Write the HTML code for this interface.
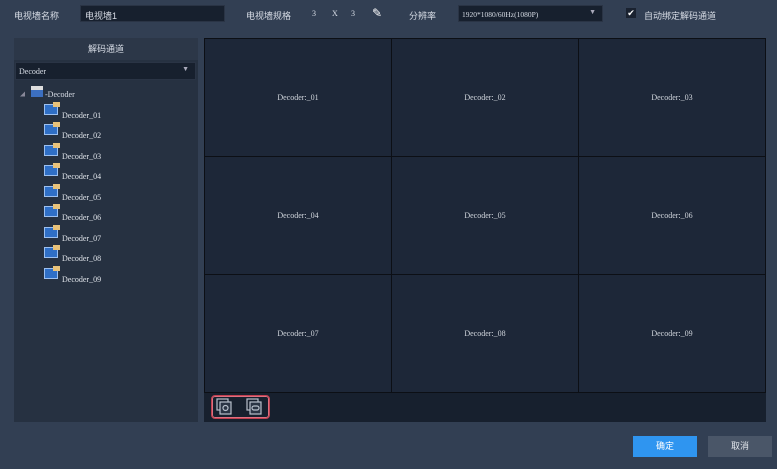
<!DOCTYPE html>
<html><head><meta charset="utf-8"><style>
*{margin:0;padding:0;box-sizing:border-box}
body{width:777px;height:469px;background:#323f53;font-family:"Liberation Sans","Noto Sans CJK SC",sans-serif;font-size:9px;color:#d8dde6;position:relative;overflow:hidden}
.a{position:absolute}
.mono{font-family:"Liberation Serif","Noto Serif CJK SC",serif}
.inp{background:#17202e;border:1px solid #2a3445}
.cell{position:absolute;background:#1d2738;border:1px solid #0c0f15;display:flex;align-items:center;justify-content:center;font-family:"Liberation Serif",serif;font-size:8px;color:#d0d5dc}
.ti{position:absolute;left:46px;font-family:"Liberation Serif",serif;font-size:8px;color:#e0e4ea}
.ic{position:absolute;left:-2px;top:-7px;width:14px;height:11px;background:#2f6fc6;border:1px solid #9cc0f0}
.ic:after{content:"";position:absolute;right:-3px;top:-3px;width:7px;height:5px;background:#e8c27a}
</style></head><body>
<div class="a" style="left:14px;top:9px">电视墙名称</div>
<div class="a inp" style="left:80px;top:5px;width:145px;height:17px;padding:3px 4px">电视墙1</div>
<div class="a" style="left:246px;top:9px">电视墙规格</div>
<div class="a mono" style="left:312px;top:9px;font-size:8px">3</div>
<div class="a mono" style="left:332px;top:9px;font-size:8px">X</div>
<div class="a mono" style="left:351px;top:9px;font-size:8px">3</div>
<div class="a" style="left:372px;top:6px;font-size:12px;color:#fff">✎</div>
<div class="a" style="left:409px;top:9px">分辨率</div>
<div class="a inp" style="left:458px;top:5px;width:145px;height:17px;padding:4px 3px;font-size:7.5px" ><span class="mono">1920*1080/60Hz(1080P)</span><span style="position:absolute;right:6px;top:3px;font-size:7px;color:#aab">▼</span></div>
<div class="a" style="left:626px;top:8px;width:10px;height:10px;background:#1a2230;color:#fff;font-size:9px;line-height:10px;text-align:center">✔</div>
<div class="a" style="left:644px;top:9px">自动绑定解码通道</div>

<div class="a" style="left:14px;top:38px;width:184px;height:384px;background:#263141"></div>
<div class="a" style="left:14px;top:38px;width:184px;height:22px;background:#2c3748;text-align:center;line-height:22px;font-size:9px">解码通道</div>
<div class="a inp" style="left:15px;top:62px;width:181px;height:18px;padding:4px 3px;font-size:8px"><span class="mono">Decoder</span><span style="position:absolute;right:6px;top:3px;font-size:7px;color:#aab">▼</span></div>
<div class="a" style="left:20px;top:91px;font-size:5px;color:#889">◢</div>
<div class="a" style="left:31px;top:86px;width:12px;height:11px;background:#3c6fc0;border-top:4px solid #ddd"></div>
<div class="a mono" style="left:45px;top:90px;font-size:8px">-Decoder</div>
<div class="a" style="left:0;top:0">
<div class="ti" style="top:111px"><span class="ic"></span><span style="margin-left:16px">Decoder_01</span></div>
<div class="ti" style="top:131px"><span class="ic"></span><span style="margin-left:16px">Decoder_02</span></div>
<div class="ti" style="top:152px"><span class="ic"></span><span style="margin-left:16px">Decoder_03</span></div>
<div class="ti" style="top:172px"><span class="ic"></span><span style="margin-left:16px">Decoder_04</span></div>
<div class="ti" style="top:193px"><span class="ic"></span><span style="margin-left:16px">Decoder_05</span></div>
<div class="ti" style="top:213px"><span class="ic"></span><span style="margin-left:16px">Decoder_06</span></div>
<div class="ti" style="top:234px"><span class="ic"></span><span style="margin-left:16px">Decoder_07</span></div>
<div class="ti" style="top:254px"><span class="ic"></span><span style="margin-left:16px">Decoder_08</span></div>
<div class="ti" style="top:275px"><span class="ic"></span><span style="margin-left:16px">Decoder_09</span></div>
</div>

<div class="a" style="left:204px;top:38px;width:562px;height:384px;background:#17202e"></div>
<div class="cell" style="left:204px;top:38px;width:188px;height:119px">Decoder:_01</div>
<div class="cell" style="left:391px;top:38px;width:188px;height:119px">Decoder:_02</div>
<div class="cell" style="left:578px;top:38px;width:188px;height:119px">Decoder:_03</div>
<div class="cell" style="left:204px;top:156px;width:188px;height:119px">Decoder:_04</div>
<div class="cell" style="left:391px;top:156px;width:188px;height:119px">Decoder:_05</div>
<div class="cell" style="left:578px;top:156px;width:188px;height:119px">Decoder:_06</div>
<div class="cell" style="left:204px;top:274px;width:188px;height:119px">Decoder:_07</div>
<div class="cell" style="left:391px;top:274px;width:188px;height:119px">Decoder:_08</div>
<div class="cell" style="left:578px;top:274px;width:188px;height:119px">Decoder:_09</div>
<div class="a" style="left:211px;top:395px;width:59px;height:24px;border:1px solid #c04050;border-radius:4px;box-shadow:inset 0 0 0 1px #e07080"></div>
<svg class="a" style="left:216px;top:398px" width="50" height="18" viewBox="0 0 50 18" fill="none" stroke="#b8c0cc" stroke-width="1.2">
<rect x="1" y="1" width="11" height="11"/><rect x="4" y="4" width="11" height="12" fill="#2a3444"/><circle cx="9.5" cy="10" r="2.5"/>
<rect x="31" y="1" width="11" height="11"/><rect x="34" y="4" width="11" height="12" fill="#2a3444"/><rect x="36" y="8" width="7" height="4" rx="2"/>
</svg>
<div class="a" style="left:633px;top:436px;width:64px;height:21px;background:#2f95f0;color:#fff;text-align:center;line-height:21px">确定</div>
<div class="a" style="left:708px;top:436px;width:64px;height:21px;background:#4a5668;color:#e0e4ea;text-align:center;line-height:21px">取消</div>
</body></html>
